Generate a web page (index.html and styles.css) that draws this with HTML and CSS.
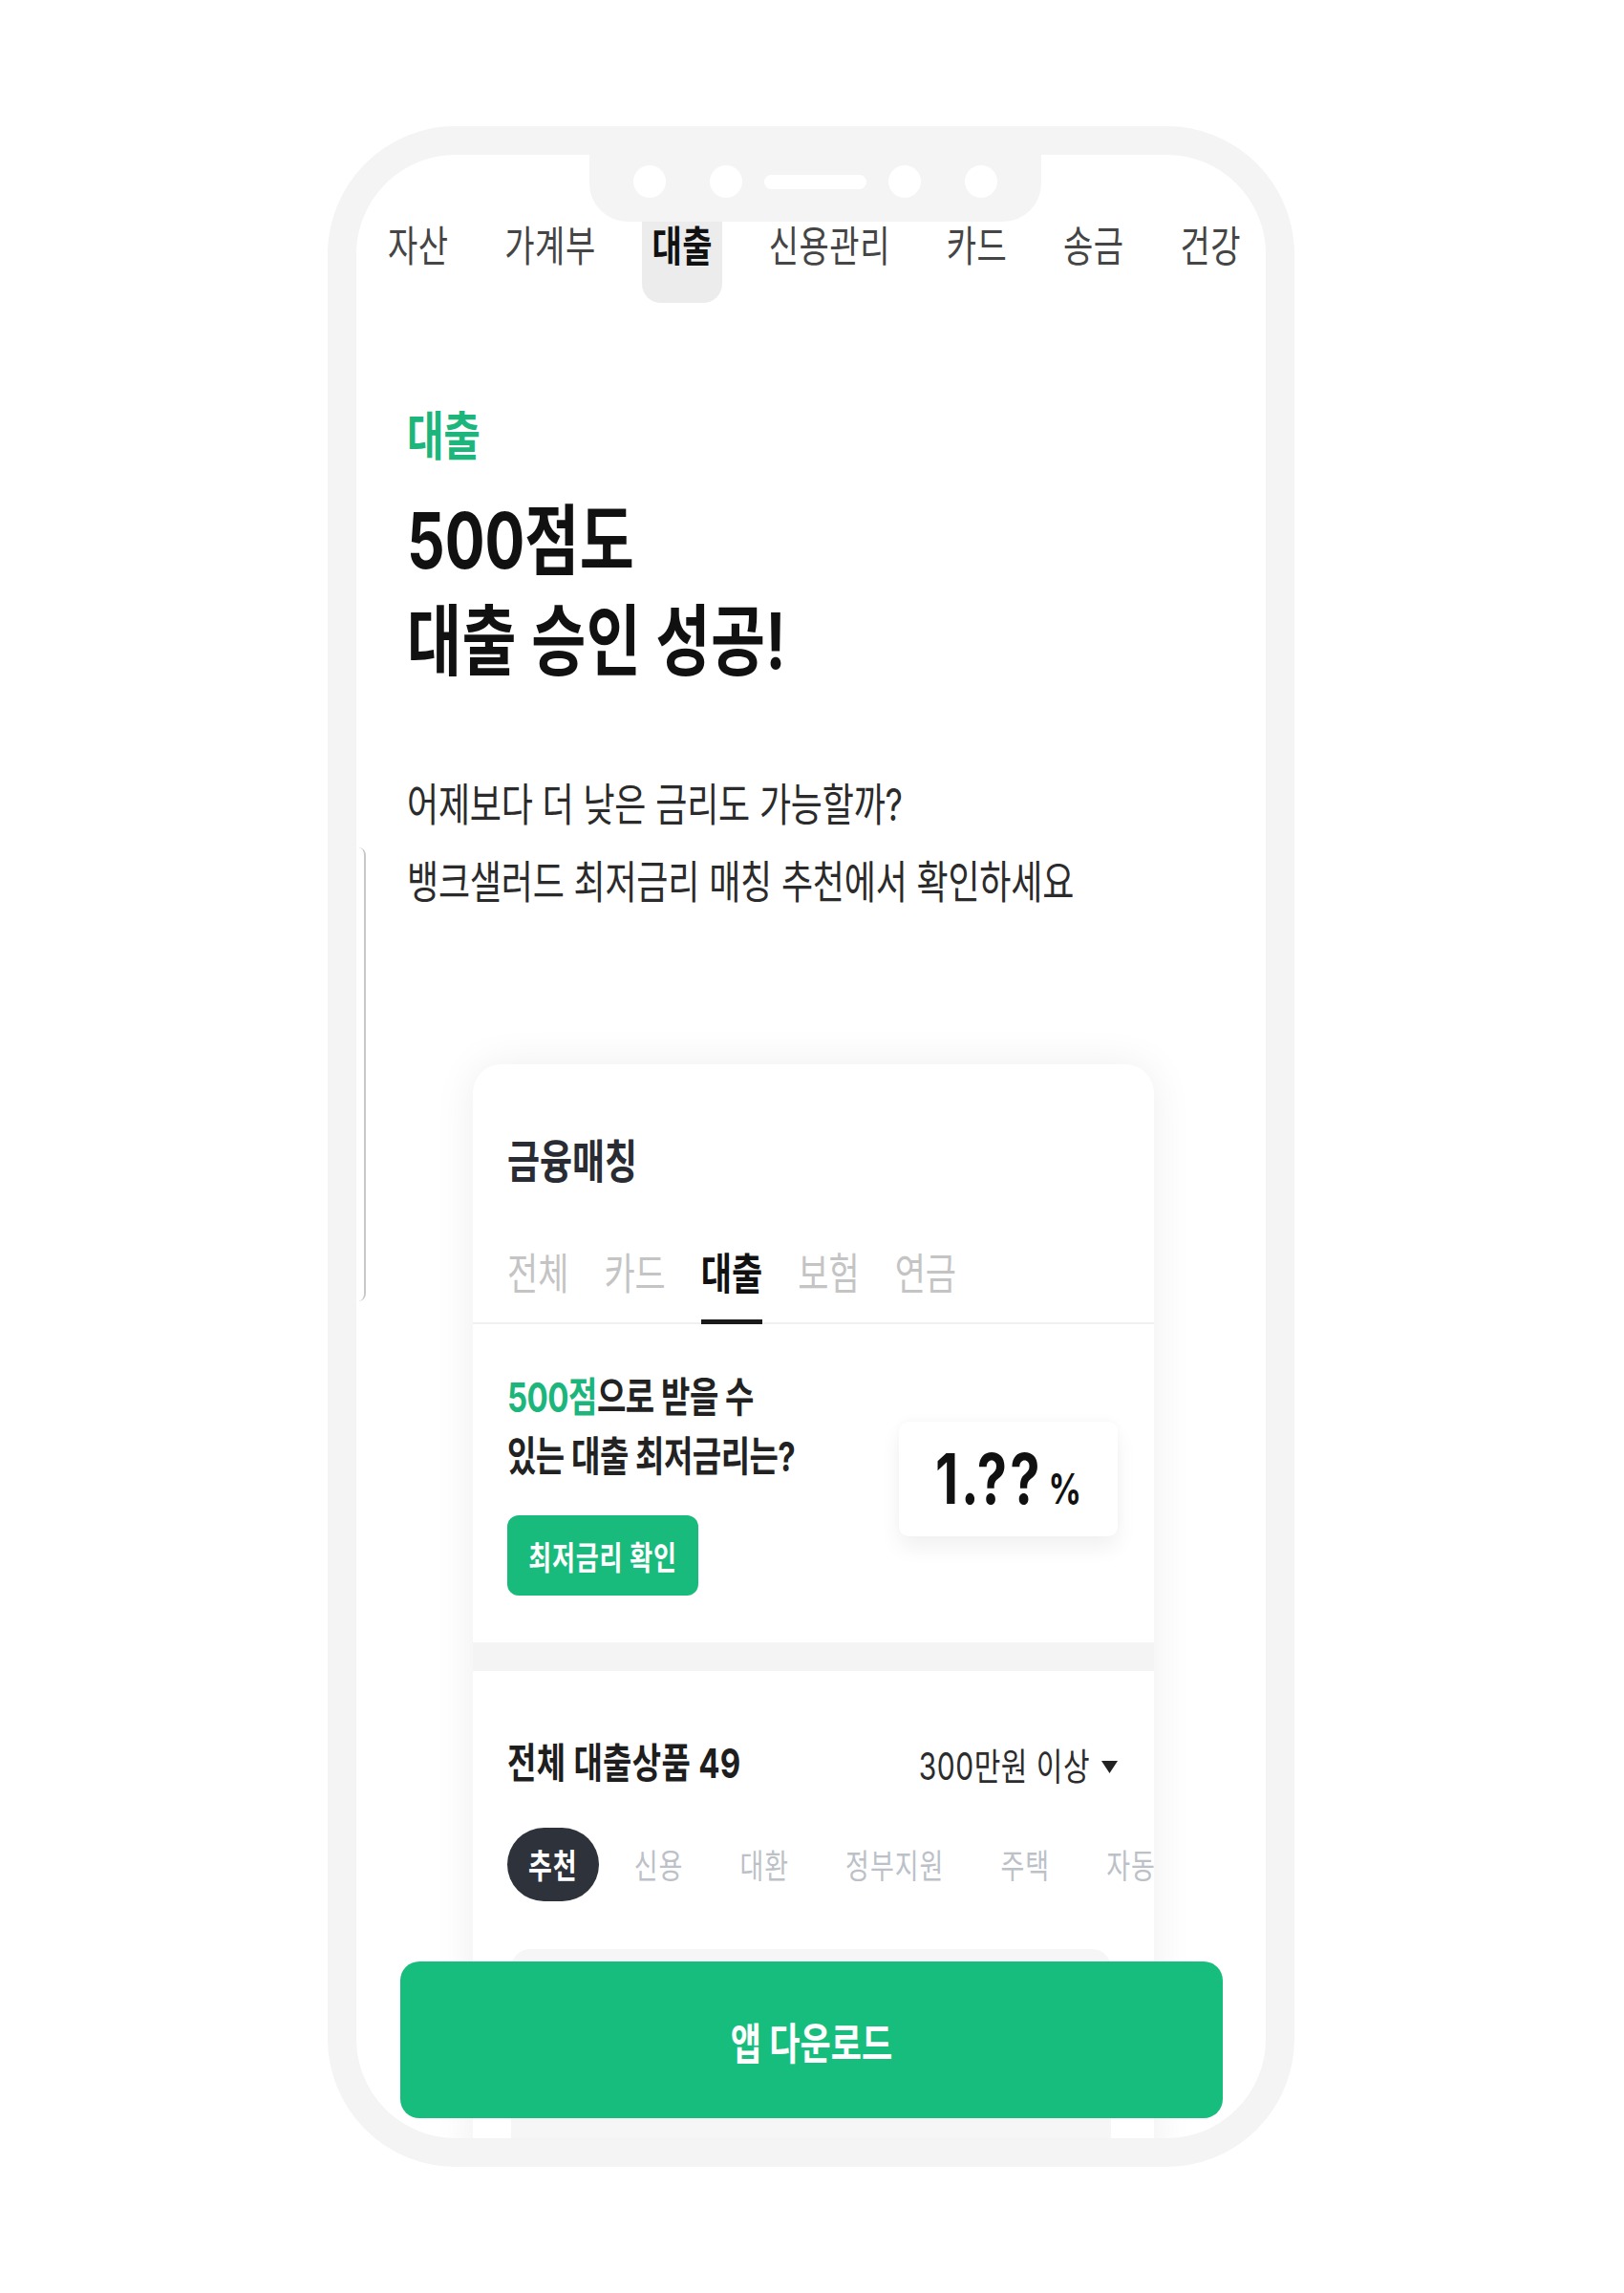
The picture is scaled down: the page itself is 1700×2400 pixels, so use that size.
FILE: index.html
```html
<!DOCTYPE html>
<html lang="ko">
<head>
<meta charset="utf-8">
<title>뱅크샐러드 대출</title>
<link rel="stylesheet" href="styles.css">
</head>
<body>
<div class="phone">
  <nav class="topnav">
    <span class="nav-item"><span class="tall">자산</span></span>
    <span class="nav-item"><span class="tall">가계부</span></span>
    <span class="nav-item active"><span class="tall">대출</span></span>
    <span class="nav-item"><span class="tall">신용관리</span></span>
    <span class="nav-item"><span class="tall">카드</span></span>
    <span class="nav-item"><span class="tall">송금</span></span>
    <span class="nav-item"><span class="tall">건강</span></span>
  </nav>

  <section class="hero">
    <p class="eyebrow">대출</p>
    <h1 class="headline"><span class="num">500</span>점도<br>대출 승인 성공!</h1>
    <p class="lead">어제보다 더 낮은 금리도 가능할까?<br>뱅크샐러드 최저금리 매칭 추천에서 확인하세요</p>
  </section>

  <section class="match-card">
    <h2 class="match-title"><span class="tall">금융매칭</span></h2>
    <div class="match-tabs">
      <span class="mtab"><span class="tall">전체</span></span>
      <span class="mtab"><span class="tall">카드</span></span>
      <span class="mtab active"><span class="tall">대출</span></span>
      <span class="mtab"><span class="tall">보험</span></span>
      <span class="mtab"><span class="tall">연금</span></span>
    </div>

    <div class="rate-section">
      <div class="rate-left">
        <p class="rate-q"><span class="green"><span class="num">500</span>점</span>으로 받을 수<br>있는 대출 최저금리는?</p>
        <button class="rate-btn"><span class="tall">최저금리 확인</span></button>
      </div>
      <div class="rate-box">
        <div class="rate-value"><span class="rate-num">1.??</span><span class="rate-pct">%</span></div>
      </div>
    </div>

    <div class="band"></div>

    <div class="products">
      <div class="products-head">
        <h3 class="products-title"><span class="tall">전체 대출상품 49</span></h3>
        <span class="amount"><span class="tall">300만원 이상</span><svg class="caret" width="17" height="13" viewBox="0 0 17 13"><polygon points="0,0 17,0 8.5,13" fill="#222"/></svg></span>
      </div>
      <div class="chips">
        <span class="chip active"><span class="tall">추천</span></span>
        <span class="chip"><span class="tall">신용</span></span>
        <span class="chip"><span class="tall">대환</span></span>
        <span class="chip"><span class="tall">정부지원</span></span>
        <span class="chip"><span class="tall">주택</span></span>
        <span class="chip"><span class="tall">자동차</span></span>
      </div>
      <div class="product-stub"></div>
    </div>
  </section>

  <div class="notch">
    <span class="dot dot-l"></span>
    <span class="dot"></span>
    <span class="speaker"></span>
    <span class="dot"></span>
    <span class="dot dot-r"></span>
  </div>
  <div class="side-line"></div>
  <a class="download"><span class="tall">앱 다운로드</span></a>
</div>
</body>
</html>
```

FILE: styles.css
```css
* {
  box-sizing: border-box;
  margin: 0;
  padding: 0;
}

body {
  width: 1700px;
  height: 2400px;
  background: #ffffff;
  font-family: "Inter", "Noto Sans CJK KR", "Noto Sans", sans-serif;
  color: #111;
  overflow: hidden;
}

.tall {
  display: inline-block;
  transform: scaleY(1.3);
}

/* phone frame */
.phone {
  position: relative;
  width: 1012px;
  height: 2136px;
  margin: 132px 0 0 343px;
  border: 30px solid #f4f4f4;
  border-radius: 134px;
  overflow: hidden;
  background: #ffffff;
}

.notch {
  position: absolute;
  top: 0;
  left: 244px;
  width: 473px;
  height: 70px;
  padding-bottom: 14px;
  background: #f4f4f4;
  border-radius: 0 0 40px 40px;
  display: flex;
  align-items: center;
  justify-content: center;
  gap: 23px;
  z-index: 3;
}

.dot {
  width: 34px;
  height: 34px;
  border-radius: 50%;
  background: #ffffff;
}

.dot-l { margin-right: 23px; }
.dot-r { margin-left: 23px; }

.speaker {
  width: 107px;
  height: 15px;
  border-radius: 8px;
  background: #ffffff;
}

.side-line {
  position: absolute;
  left: 2px;
  top: 725px;
  width: 8px;
  height: 475px;
  border-right: 2px solid #c8c8c8;
  border-radius: 0 14px 14px 0;
}

/* top navigation */
.topnav {
  display: flex;
  justify-content: space-between;
  height: 119px;
  margin-top: 36px;
  padding: 0 16px 0 23px;
}

.nav-item {
  display: flex;
  align-items: center;
  padding: 0 10px 5px;
  font-size: 34px;
  letter-spacing: 0.5px;
  color: #454545;
}

.nav-item.active {
  background: #ececec;
  border-radius: 0 0 20px 20px;
  font-weight: 700;
  color: #111;
}

/* hero */
.hero {
  padding-left: 53px;
}

.eyebrow {
  margin-top: 116px;
  font-size: 42px;
  line-height: 46px;
  letter-spacing: -0.5px;
  font-weight: 700;
  color: #1cb67c;
  transform: scaleY(1.3);
}

.headline {
  margin-top: 58px;
  font-size: 62px;
  line-height: 81px;
  letter-spacing: 0.5px;
  font-weight: 700;
  color: #111;
  transform: scaleY(1.3);
}

.headline .num {
  letter-spacing: 0;
}

.lead {
  margin-top: 123px;
  font-size: 36px;
  line-height: 61.5px;
  letter-spacing: -0.2px;
  color: #2b2b2b;
  transform: scaleY(1.3);
}

/* matching card */
.match-card {
  width: 713px;
  margin: 169px 0 0 122px;
  padding-top: 77px;
  background: #ffffff;
  border-radius: 30px;
  box-shadow: 0 0 44px rgba(0, 0, 0, 0.07);
}

.match-title {
  padding-left: 36px;
  font-size: 37px;
  line-height: 50px;
  letter-spacing: 0;
  font-weight: 700;
  color: #292c32;
}

.match-tabs {
  display: flex;
  gap: 37px;
  margin-top: 70px;
  padding-left: 36px;
  box-shadow: inset 0 -2px 0 #f0f0f0;
}

.mtab {
  font-size: 35px;
  line-height: 44px;
  letter-spacing: 0;
  padding-bottom: 26px;
  border-bottom: 5px solid transparent;
  color: #c4c4c4;
}

.mtab.active {
  color: #111;
  font-weight: 700;
  border-bottom-color: #1a1a1a;
}

.rate-section {
  display: flex;
  justify-content: space-between;
  align-items: flex-start;
  padding: 0 38px 49px 36px;
}

.rate-left {
  padding-top: 61px;
}

.rate-q {
  font-size: 33px;
  line-height: 47px;
  letter-spacing: -0.5px;
  font-weight: 700;
  color: #222;
  transform: scaleY(1.3);
}

.green {
  color: #1cb67c;
}

.rate-btn {
  display: flex;
  align-items: center;
  justify-content: center;
  margin-top: 45px;
  width: 200px;
  height: 84px;
  border: 0;
  border-radius: 12px;
  background: #19bb7d;
  color: #ffffff;
  font-family: inherit;
  font-size: 26px;
  letter-spacing: 0.8px;
  font-weight: 700;
}

.rate-box {
  margin-top: 102px;
  width: 229px;
  height: 120px;
  border-radius: 10px;
  background: #ffffff;
  box-shadow: 0 12px 22px rgba(0, 0, 0, 0.06), 0 -3px 10px rgba(0, 0, 0, 0.025);
  display: flex;
  align-items: center;
  justify-content: center;
}

.rate-value {
  display: flex;
  align-items: baseline;
  transform: scaleY(1.3);
}

.rate-num {
  font-size: 56px;
  font-weight: 700;
  letter-spacing: 3px;
  color: #111;
}

.rate-pct {
  margin-left: 6px;
  font-size: 34px;
  font-weight: 700;
  color: #111;
}

.band {
  height: 30px;
  background: #f4f4f4;
}

.products-head {
  display: flex;
  justify-content: space-between;
  align-items: center;
  padding: 66px 38px 0 36px;
}

.products-title {
  font-size: 33px;
  line-height: 50px;
  letter-spacing: 0.3px;
  font-weight: 700;
  color: #1e1e1e;
}

.amount {
  display: flex;
  align-items: center;
  gap: 12px;
  padding-top: 9px;
  font-size: 30px;
  line-height: 50px;
  letter-spacing: 0.5px;
  color: #2c2c2c;
}

.caret {
  display: block;
}

.chips {
  display: flex;
  gap: 15px;
  margin-top: 39px;
  padding-left: 36px;
  overflow: hidden;
  white-space: nowrap;
}

.chip {
  flex-shrink: 0;
  display: flex;
  align-items: center;
  height: 77px;
  padding: 0 22px;
  border-radius: 39px;
  font-size: 27px;
  letter-spacing: 1px;
  color: #bcc1c8;
}

.chip.active {
  background: #2e323b;
  color: #ffffff;
  font-weight: 700;
}

.product-stub {
  height: 300px;
  margin: 50px 45px 0 40px;
  border-radius: 20px;
  background: #f6f6f6;
}

/* download button */
.download {
  position: absolute;
  left: 46px;
  right: 45px;
  bottom: 21px;
  height: 164px;
  border-radius: 20px;
  background: #17bd7d;
  color: #ffffff;
  display: flex;
  align-items: center;
  justify-content: center;
  font-size: 35px;
  letter-spacing: 0;
  font-weight: 700;
  z-index: 2;
}
```
